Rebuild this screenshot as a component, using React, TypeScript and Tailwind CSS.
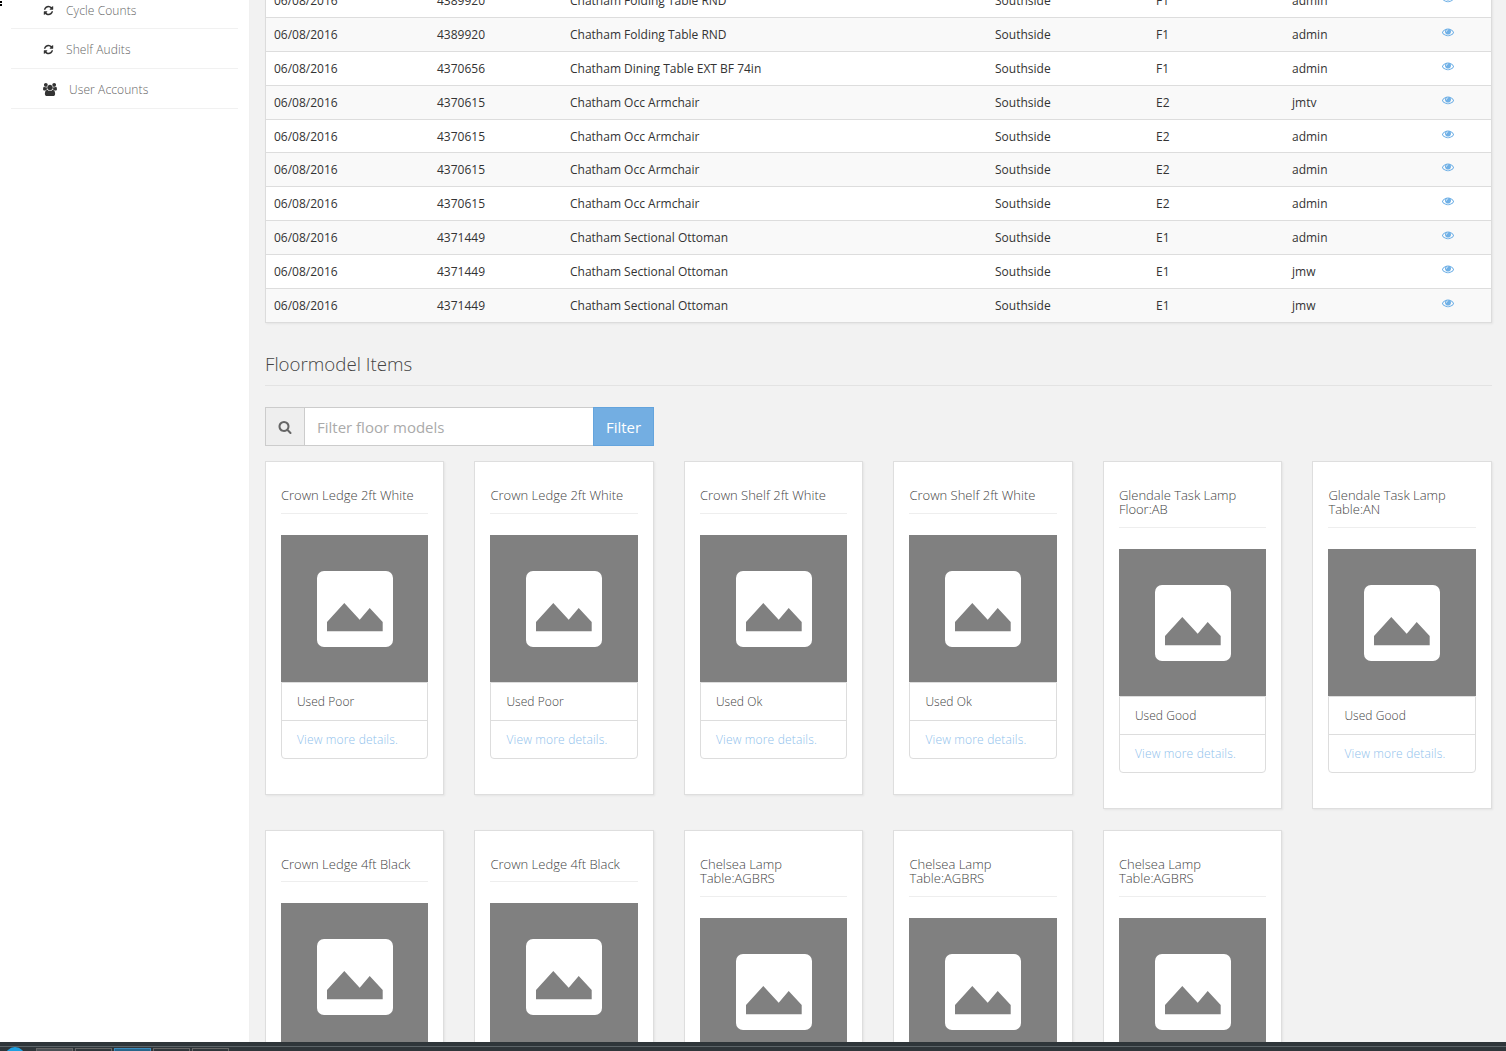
const rows = [
  ["06/08/2016", "4389920", "Chatham Folding Table RND", "Southside", "F1", "admin"],
  ["06/08/2016", "4389920", "Chatham Folding Table RND", "Southside", "F1", "admin"],
  ["06/08/2016", "4370656", "Chatham Dining Table EXT BF 74in", "Southside", "F1", "admin"],
  ["06/08/2016", "4370615", "Chatham Occ Armchair", "Southside", "E2", "jmtv"],
  ["06/08/2016", "4370615", "Chatham Occ Armchair", "Southside", "E2", "admin"],
  ["06/08/2016", "4370615", "Chatham Occ Armchair", "Southside", "E2", "admin"],
  ["06/08/2016", "4370615", "Chatham Occ Armchair", "Southside", "E2", "admin"],
  ["06/08/2016", "4371449", "Chatham Sectional Ottoman", "Southside", "E1", "admin"],
  ["06/08/2016", "4371449", "Chatham Sectional Ottoman", "Southside", "E1", "jmw"],
  ["06/08/2016", "4371449", "Chatham Sectional Ottoman", "Southside", "E1", "jmw"],
];

const cards = [
  ["Crown Ledge 2ft White", "Used Poor"],
  ["Crown Ledge 2ft White", "Used Poor"],
  ["Crown Shelf 2ft White", "Used Ok"],
  ["Crown Shelf 2ft White", "Used Ok"],
  ["Glendale Task Lamp Floor:AB", "Used Good"],
  ["Glendale Task Lamp Table:AN", "Used Good"],
  ["Crown Ledge 4ft Black", "Used Good"],
  ["Crown Ledge 4ft Black", "Used Good"],
  ["Chelsea Lamp Table:AGBRS", "Used Good"],
  ["Chelsea Lamp Table:AGBRS", "Used Good"],
  ["Chelsea Lamp Table:AGBRS", "Used Good"],
];

// Font Awesome 4 glyphs, the picture uses the old set
function Glyph({ d, w = 1792, className }: { d: string; w?: number; className: string }) {
  return (
    <svg viewBox={`0 0 ${w} 1792`} fill="currentColor" className={className}>
      <path d={d} />
    </svg>
  );
}

const refreshPath =
  "M1639 1056q0 5-1 7-64 268-268 434.5t-478 166.5q-146 0-282.5-55t-243.5-157l-129 129q-19 19-45 19t-45-19-19-45v-448q0-26 19-45t45-19h448q26 0 45 19t19 45-19 45l-137 137q71 66 161 102t187 36q134 0 250-65t186-179q11-17 53-117 8-23 30-23h192q13 0 22.5 9.5t9.5 22.5zm25-800v448q0 26-19 45t-45 19h-448q-26 0-45-19t-19-45 19-45l138-138q-148-137-349-137-134 0-250 65t-186 179q-11 17-53 117-8 23-30 23h-199q-13 0-22.5-9.5t-9.5-22.5v-7q65-268 270-434.5t480-166.5q146 0 284 55.5t245 156.5l130-129q19-19 45-19t45 19 19 45z";
const usersPath =
  "M593 896q-162 5-265 128h-134q-82 0-138-40.5t-56-118.5q0-353 124-353 6 0 43.5 21t97.5 42.5 119 21.5q67 0 133-23-5 37-5 66 0 139 81 256zm1071 637q0 120-73 189.5t-194 69.5h-874q-121 0-194-69.5t-73-189.5q0-53 3.5-103.5t14-109 26.5-108.5 43-97.5 62-81 85.5-53.5 111.5-20q10 0 43 21.5t73 48 107 48 135 21.5 135-21.5 107-48 73-48 43-21.5q61 0 111.5 20t85.5 53.5 62 81 43 97.5 26.5 108.5 14 109 3.5 103.5zm-1024-1277q0 106-75 181t-181 75-181-75-75-181 75-181 181-75 181 75 75 181zm704 384q0 159-112.5 271.5t-271.5 112.5-271.5-112.5-112.5-271.5 112.5-271.5 271.5-112.5 271.5 112.5 112.5 271.5zm576 225q0 78-56 118.5t-138 40.5h-134q-103-123-265-128 81-117 81-256 0-29-5-66 66 23 133 23 59 0 119-21.5t97.5-42.5 43.5-21q124 0 124 353zm-128-609q0 106-75 181t-181 75-181-75-75-181 75-181 181-75 181 75 75 181z";
const eyePath =
  "M1664 960q-152-236-381-353 61 104 61 225 0 185-131.5 316.5t-316.5 131.5-316.5-131.5-131.5-316.5q0-121 61-225-229 117-381 353 133 205 333.5 326.5t434.5 121.5 434.5-121.5 333.5-326.5zm-720-384q0-20-14-34t-34-14q-125 0-214.5 89.5t-89.5 214.5q0 20 14 34t34 14 34-14 14-34q0-86 61-147t147-61q20 0 34-14t14-34zm848 384q0 34-20 69-140 230-376.5 368.5t-499.5 138.5-499.5-139-376.5-368q-20-35-20-69t20-69q140-229 376.5-368t499.5-139 499.5 139 376.5 368q20 35 20 69z";
const searchPath =
  "M1216 832q0-185-131.5-316.5t-316.5-131.5-316.5 131.5-131.5 316.5 131.5 316.5 316.5 131.5 316.5-131.5 131.5-316.5zm512 832q0 52-38 90t-90 38q-54 0-90-38l-343-342q-179 124-399 124-143 0-273.5-55.5t-225-150-150-225-55.5-273.5 55.5-273.5 150-225 225-150 273.5-55.5 273.5 55.5 225 150 150 225 55.5 273.5q0 220-124 399l343 343q37 37 37 90z";

function Placeholder() {
  return (
    <svg viewBox="0 0 147.5 147.3" className="block w-full h-[147.3px] bg-[#808080]">
      <rect x="36" y="36" width="76" height="76" rx="7" fill="#fff" />
      <polygon points="46,87 63.3,68 78.7,84.7 88.7,73 101.7,87 101.7,96.3 46,96.3" fill="#808080" />
    </svg>
  );
}

function ItemCard({ title, condition }: { title: string; condition: string }) {
  return (
    <div className="bg-white border border-[#dedede] shadow-[1px_1px_2px_rgba(0,0,0,0.06)] px-[15px] pt-[26px] pb-[35.2px]">
      <h4 className="text-[13px] leading-[14.3px] font-light text-[#444] pb-[10.3px] border-b border-[#eee] mb-[21px]">
        {title}
      </h4>
      <Placeholder />
      <div className="border border-[#ddd] rounded-b-[4px] text-xs font-light">
        <div className="h-[37.7px] pt-[0.6px] flex items-center px-[15px] text-[#444] tracking-[0.05px] border-b border-[#ddd]">{condition}</div>
        <div className="h-[37.1px] pt-[1.4px] flex items-center px-[15px] text-[#8fc1ec] tracking-[0.17px]">View more details.</div>
      </div>
    </div>
  );
}

function SideLink({ icon, label, top }: { icon: React.ReactNode; label: string; top: string }) {
  return (
    <li className={`h-[40px] flex items-center gap-[12px] pl-[32px] border-b border-[#f1f1f1] ${top}`}>
      <span className="text-[#333]">{icon}</span>
      <span className="text-xs font-light text-[#666] tracking-[0.1px]">{label}</span>
    </li>
  );
}

export default function App() {
  return (
    <div className="h-screen overflow-hidden flex flex-col font-['Open_Sans',sans-serif] bg-[#f2f2f2]">
      <div className="flex flex-1 min-h-0">
        {/* SIDEBAR */}
        <aside className="w-[250px] shrink-0 bg-white border-r border-[#f0f0f0] px-[11px] -mt-[11px] relative">
          <ul className="w-[227px]">
            <SideLink icon={<Glyph d={refreshPath} className="w-[11px] h-[11px]" />} label="Cycle Counts" top="pt-[4px]" />
            <SideLink icon={<Glyph d={refreshPath} className="w-[11px] h-[11px]" />} label="Shelf Audits" top="pt-[2px]" />
            <SideLink icon={<Glyph d={usersPath} w={1920} className="w-[14px] h-[13px]" />} label="User Accounts" top="pt-[2px]" />
          </ul>
          <div className="absolute left-0 top-[12px] w-[2px] flex flex-col gap-[1px]">
            <span className="h-[2px] bg-black" />
            <span className="h-[2px] bg-black" />
          </div>
        </aside>

        {/* MAIN */}
        <main className="flex-1 min-w-0 pl-[15px] pr-[14px] overflow-hidden">
          <div className="-mt-[17px] bg-white border border-[#dcdcdc] shadow-[1px_1px_2px_rgba(0,0,0,0.06)]">
            <table className="w-full table-fixed border-collapse text-xs text-[#333]">
              <colgroup>
                <col className="w-[163px]" />
                <col className="w-[133px]" />
                <col className="w-[425px]" />
                <col className="w-[161px]" />
                <col className="w-[136px]" />
                <col className="w-[150px]" />
                <col />
              </colgroup>
              <tbody>
                {rows.map((row, i) => (
                  <tr key={i} className={`h-[33.8px] border-b border-[#ddd] last:border-b-0 ${i % 2 === 1 ? "bg-[#f9f9f9]" : "bg-white"}`}>
                    {row.map((cell, j) => (
                      <td key={j} className="px-2 pt-[1px] align-middle">
                        {cell}
                      </td>
                    ))}
                    <td className="px-2 align-middle">
                      <Glyph d={eyePath} className="w-[12px] h-[12px] text-[#6fb0e6] -mt-[5px]" />
                    </td>
                  </tr>
                ))}
              </tbody>
            </table>
          </div>

          <h3 className="mt-[26px] text-[18.7px] leading-[30px] font-light text-[#444] pb-[6px] border-b border-[#e3e3e3]">
            Floormodel Items
          </h3>

          <div className="mt-[21px] flex w-[389px] h-[39px] text-[15px]">
            <span className="w-[40px] flex items-center justify-center pt-[2px] bg-[#eee] border border-[#ccc] text-[#666]">
              <Glyph d={searchPath} className="w-[14px] h-[14px]" />
            </span>
            <input
              placeholder="Filter floor models"
              className="flex-1 min-w-0 bg-white border-y border-[#ccc] px-3 pt-[1px] font-normal placeholder:text-[#aaa] outline-none"
            />
            <button type="button" className="w-[61px] pt-[2px] bg-[#73aee2] border border-[#64a4dd] text-white text-[15px] font-normal">
              Filter
            </button>
          </div>

          <div className="mt-[15.1px] -ml-[0.1px] w-[1227px] grid grid-cols-6 gap-x-[30px] gap-y-[20.4px] items-start">
            {cards.map(([title, condition], i) => (
              <ItemCard key={i} title={title} condition={condition} />
            ))}
          </div>
        </main>
      </div>

      {/* TASKBAR */}
      <div className="h-[9px] shrink-0 bg-[#2f363a] relative overflow-hidden">
        <div className="h-[1px] mt-[4px] bg-[#5c6468]" />
        <div className="absolute top-[5px] left-[5px] w-[20px] h-[20px] rounded-full bg-[#1e9fe0]" />
        <div className="absolute top-[6px] left-[36px] flex gap-[2px]">
          <span className="w-[37px] h-[8px] bg-[#4a5054] border border-[#666]" />
          <span className="w-[37px] h-[8px] border border-[#666]" />
          <span className="w-[37px] h-[8px] bg-[#28658a] border border-[#3a8abb]" />
          <span className="w-[37px] h-[8px] border border-[#666]" />
          <span className="w-[37px] h-[8px] border border-[#666]" />
        </div>
      </div>
    </div>
  );
}
